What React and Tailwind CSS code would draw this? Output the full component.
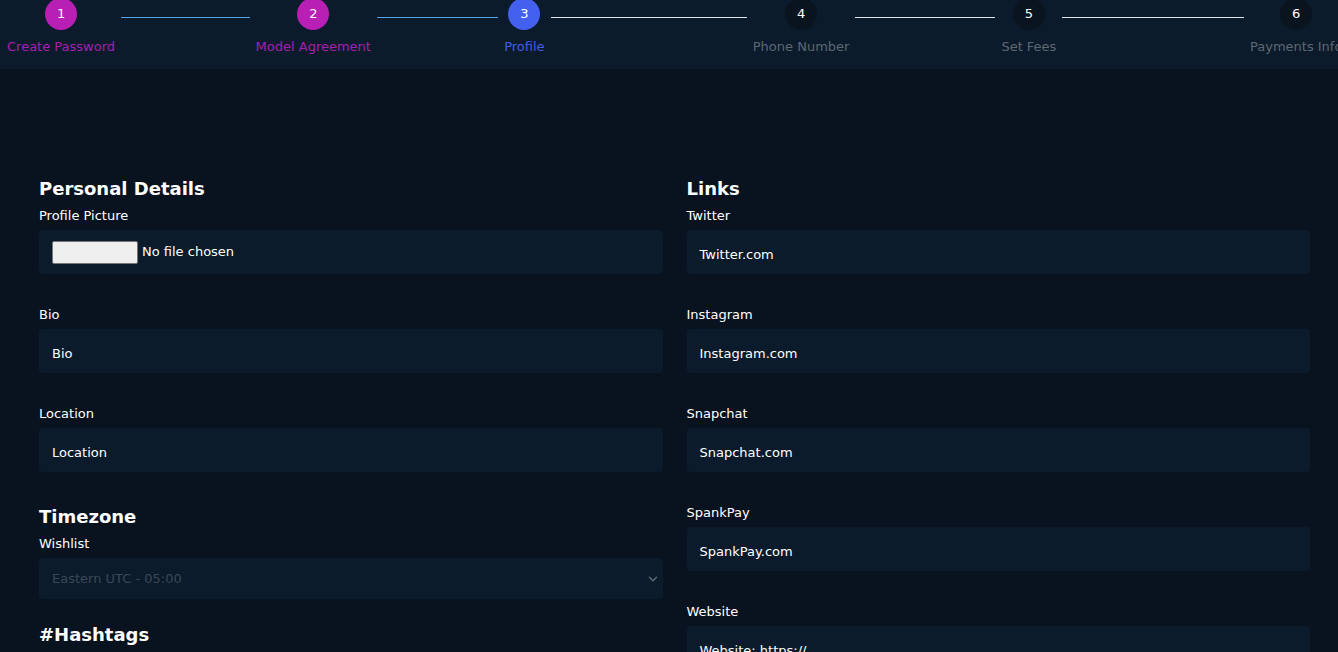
import { ChevronDown } from 'lucide-react';

const steps = [
  { n: 1, label: 'Create Password', state: 'done' },
  { n: 2, label: 'Model Agreement', state: 'done' },
  { n: 3, label: 'Profile', state: 'active' },
  { n: 4, label: 'Phone Number', state: 'todo' },
  { n: 5, label: 'Set Fees', state: 'todo' },
  { n: 6, label: 'Payments Info', state: 'todo' },
];

const circleClass = {
  done: 'bg-[#b71fb5]',
  active: 'bg-[#4361ee]',
  todo: 'bg-[#09141f]',
};

const labelClass = {
  done: 'text-[#a71fae]',
  active: 'text-[#3f5fe3]',
  todo: 'text-[#5c6773]',
};

const Stepper = () => (
  <div className="h-[69px] bg-[#0c1b2b] overflow-hidden">
    <div className="flex pl-[7px]">
      {steps.map((s, i) => (
        <div key={s.n} className="w-[248.6px] shrink-0 flex items-start">
          <div className="flex flex-col items-center shrink-0">
            <div className={`mt-[-2px] w-8 h-8 rounded-full flex items-center justify-center text-white text-[13px] ${circleClass[s.state]}`}>
              {s.n}
            </div>
            <span className={`mt-[9px] text-[13px] leading-4 whitespace-nowrap ${labelClass[s.state]}`}>
              {s.label}
            </span>
          </div>
          {i < steps.length - 1 && (
            <div className={`flex-1 h-px mt-[17px] mx-[6px] ${i < 2 ? 'bg-[#5ba4e4]' : 'bg-[#e2e6ea]'}`} />
          )}
        </div>
      ))}
    </div>
  </div>
);

const Heading = ({ children, className = '' }) => (
  <h2 className={`text-[18px] font-bold text-white leading-6 mb-[7px] ${className}`}>{children}</h2>
);

const Field = ({ label, placeholder, children }) => (
  <div className="mb-[33px]">
    <label className="block text-[13px] leading-4 text-white mb-[6px]">{label}</label>
    {children || (
      <div className="h-[44px] rounded bg-[#0c1b2c] flex items-center px-[13px] pt-[5px] text-[13px] text-white">
        {placeholder}
      </div>
    )}
  </div>
);

const App = () => {
  return (
    <div
      className="min-h-[652px] bg-[#09131f] overflow-hidden"
      style={{ fontFamily: '"DejaVu Sans", sans-serif' }}
    >
      <Stepper />
      <div className="grid grid-cols-2 gap-6 pl-[39px] pr-[28px] pt-[108px]">
        <div>
          <Heading>Personal Details</Heading>
          <Field label="Profile Picture">
            <div className="h-[44px] rounded bg-[#0c1b2c] flex items-center px-[13px] text-[13px] text-white gap-[4px]">
              <span className="w-[86px] h-[23px] bg-[#efefef] border border-[#767676] rounded-[2px]" />
              <span>No file chosen</span>
            </div>
          </Field>
          <Field label="Bio" placeholder="Bio" />
          <Field label="Location" placeholder="Location" />
          <Heading>Timezone</Heading>
          <div className="mb-[24px]">
            <label className="block text-[13px] leading-4 text-white mb-[6px]">Wishlist</label>
            <div className="h-[41px] rounded bg-[#0c1b2c] flex items-center justify-between pl-[13px] pr-[3px] text-[13px] text-[#3a4856]">
              <span>Eastern UTC - 05:00</span>
              <ChevronDown size={14} strokeWidth={2.5} className="text-[#5d6874]" />
            </div>
          </div>
          <Heading>#Hashtags</Heading>
        </div>
        <div>
          <Heading>Links</Heading>
          <Field label="Twitter" placeholder="Twitter.com" />
          <Field label="Instagram" placeholder="Instagram.com" />
          <Field label="Snapchat" placeholder="Snapchat.com" />
          <Field label="SpankPay" placeholder="SpankPay.com" />
          <Field label="Website" placeholder="Website: https://" />
        </div>
      </div>
    </div>
  );
};

export default App;
